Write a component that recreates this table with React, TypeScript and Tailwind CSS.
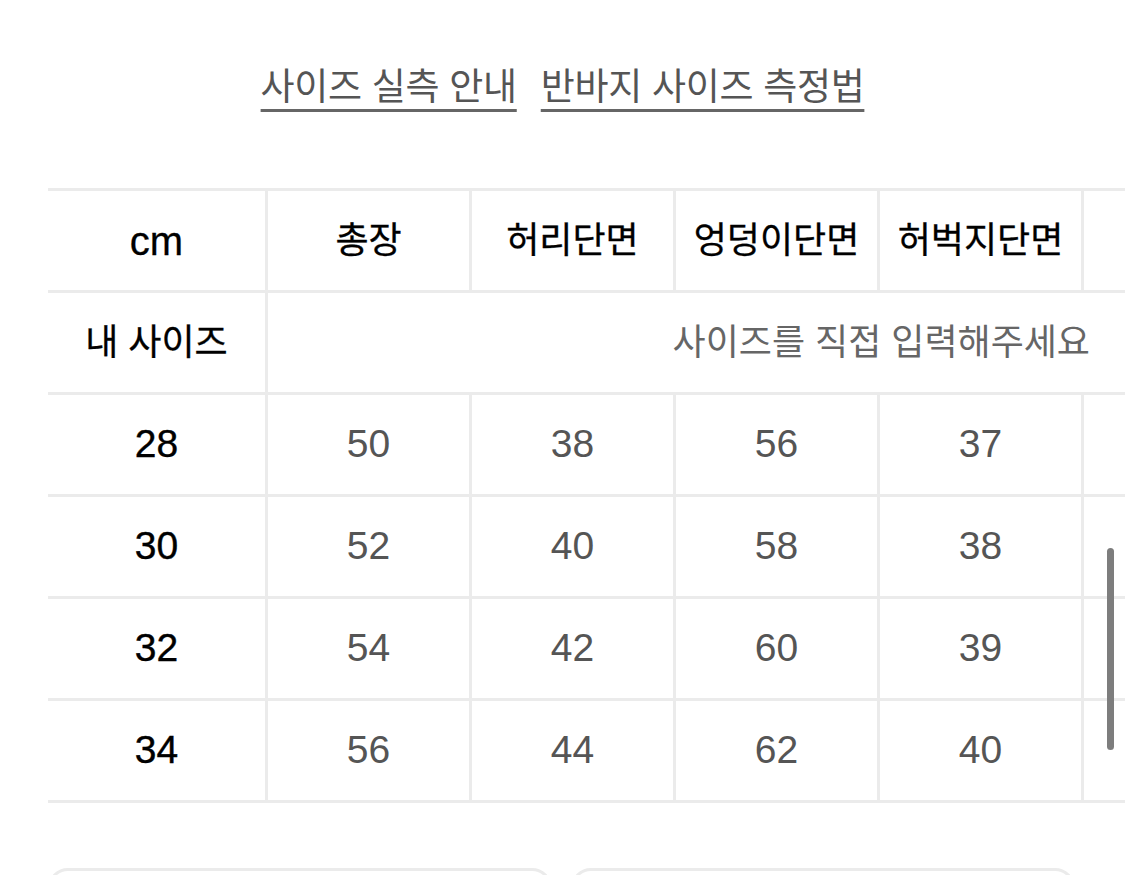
const columns = ['총장', '허리단면', '엉덩이단면', '허벅지단면', '밑위'];

const rows = [
    { size: '28', values: ['50', '38', '56', '37', ''] },
    { size: '30', values: ['52', '40', '58', '38', ''] },
    { size: '32', values: ['54', '42', '60', '39', ''] },
    { size: '34', values: ['56', '44', '62', '40', ''] },
];

const font = "font-['Liberation_Sans','Noto_Sans_CJK_KR',sans-serif]";

export default function App() {
    return (
        <div className={`w-[1125px] h-[875px] overflow-hidden bg-white ${font}`}>
            {/* guide links */}
            <div className="flex justify-center gap-[24px] pt-[60px] h-[188px]">
                <a className="text-[37px] leading-[56px] text-[#555] underline decoration-[3px] underline-offset-[9px] decoration-[#666] tracking-[-0.3px]">
                    사이즈 실측 안내
                </a>
                <a className="text-[37px] leading-[56px] text-[#555] underline decoration-[3px] underline-offset-[9px] decoration-[#666] tracking-[-0.3px]">
                    반바지 사이즈 측정법
                </a>
            </div>

            {/* size table */}
            <div className="relative flex pl-[48px]">
                <div className="w-[217px] shrink-0 flex flex-col">
                    <div className="h-[102px] border-t-[3px] border-[#ebebeb] flex items-center justify-center text-[40px] text-black [-webkit-text-stroke:0.3px_black]">cm</div>
                    <div className="h-[102px] border-t-[3px] border-[#ebebeb] flex items-center justify-center text-[36px] text-black [-webkit-text-stroke:0.3px_black]">내 사이즈</div>
                    {rows.map((r, i) => (
                        <div
                            key={r.size}
                            className={`h-[102px] border-t-[3px] border-[#ebebeb] flex items-center justify-center text-[39px] text-black [-webkit-text-stroke:0.4px_black] ${i === rows.length - 1 ? 'border-b-[3px] h-[105px]' : ''}`}
                        >
                            {r.size}
                        </div>
                    ))}
                </div>

                <div className="flex-1 overflow-hidden">
                    <div className="flex w-max">
                        {columns.map(c => (
                            <div key={c} className="w-[204px] h-[102px] shrink-0 border-l-[3px] border-t-[3px] border-[#ebebeb] flex items-center justify-center text-[36px] text-black [-webkit-text-stroke:0.3px_black]">
                                {c === '밑위' ? '' : c}
                            </div>
                        ))}
                    </div>
                    <div className="h-[102px] border-l-[3px] border-t-[3px] border-[#ebebeb] flex items-center justify-end pr-[35px] text-[36px] text-[#666]">
                        사이즈를 직접 입력해주세요
                    </div>
                    {rows.map((r, i) => (
                        <div key={r.size} className="flex w-max">
                            {r.values.map((v, j) => (
                                <div
                                    key={j}
                                    className={`w-[204px] h-[102px] shrink-0 border-l-[3px] border-t-[3px] border-[#ebebeb] flex items-center justify-center text-[39px] text-[#555] ${i === rows.length - 1 ? 'border-b-[3px] h-[105px]' : ''}`}
                                >
                                    {v}
                                </div>
                            ))}
                        </div>
                    ))}
                </div>

                {/* scroll indicator */}
                <div className="absolute left-[1107px] top-[360px] w-[7px] h-[202px] rounded-full bg-[#7d7d7d]" />
            </div>

            {/* bottom buttons */}
            <div className="flex gap-[19px] pl-[48px] pr-[50px] pt-[65px]">
                <div className="flex-1 h-[80px] rounded-[20px] border-[3px] border-[#ebebeb]" />
                <div className="flex-1 h-[80px] rounded-[20px] border-[3px] border-[#ebebeb]" />
            </div>
        </div>
    );
}
